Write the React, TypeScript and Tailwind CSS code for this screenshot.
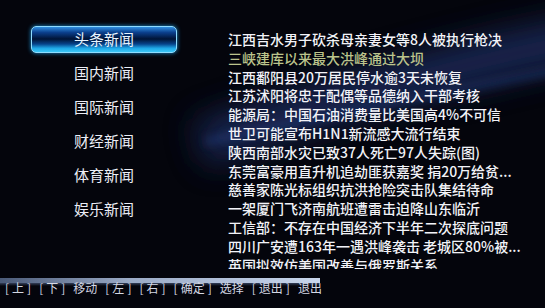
import React from "react";

const news: { t: string; c?: string }[] = [
  { t: "江西吉水男子砍杀母亲妻女等8人被执行枪决" },
  { t: "三峡建库以来最大洪峰通过大坝", c: "text-[#bcc48c]" },
  { t: "江西鄱阳县20万居民停水逾3天未恢复" },
  { t: "江苏沭阳将忠于配偶等品德纳入干部考核" },
  { t: "能源局：中国石油消费量比美国高4%不可信" },
  { t: "世卫可能宣布H1N1新流感大流行结束" },
  { t: "陕西南部水灾已致37人死亡97人失踪(图)" },
  { t: "东莞富豪用直升机追劫匪获嘉奖 捐20万给贫..." },
  { t: "慈善家陈光标组织抗洪抢险突击队集结待命" },
  { t: "一架厦门飞济南航班遭雷击迫降山东临沂" },
  { t: "工信部：不存在中国经济下半年二次探底问题" },
  { t: "四川广安遭163年一遇洪峰袭击 老城区80%被..." },
  { t: "英国拟效仿美国改善与俄罗斯关系" },
];

const menu = ["头条新闻", "国内新闻", "国际新闻", "财经新闻", "体育新闻", "娱乐新闻"];

function Key({ k }: { k: string }) {
  return (
    <span className="flex items-center gap-[3px]">
      <span>[</span>
      <span>{k}</span>
      <span>]</span>
    </span>
  );
}

export default function App() {
  return (
    <div className="relative w-[545px] h-[308px] overflow-hidden bg-[#04050c] font-['Noto_Sans_CJK_SC','Noto_Sans',sans-serif]">
      <svg className="absolute inset-0 pointer-events-none" width="545" height="308">
        <defs>
          <filter id="b1" x="-50%" y="-50%" width="200%" height="200%">
            <feGaussianBlur stdDeviation="16" />
          </filter>
          <filter id="b2" x="-50%" y="-50%" width="200%" height="200%">
            <feGaussianBlur stdDeviation="5" />
          </filter>
        </defs>
        <path d="M580 40 Q 420 70 200 145" stroke="#1a2b5c" strokeWidth="46" fill="none" filter="url(#b1)" opacity="0.85" />
        <path d="M560 70 Q 400 100 205 142" stroke="#2c4c96" strokeWidth="5" fill="none" filter="url(#b2)" opacity="0.55" />
      </svg>

      <div className="relative flex h-full flex-col">
        <div className="flex h-[278px]">
          <div className="flex w-[228px] flex-col pl-[31px] pt-[22px]">
            {menu.map((m, i) => (
              <div key={m} className="flex h-[34px] w-[146px] items-center justify-center">
                {i === 0 ? (
                  <div className="flex h-[27px] w-full items-center justify-center rounded-[5px] border border-[#8fdcff] bg-[linear-gradient(to_bottom,#2f8ee0_0%,#0b3f8c_22%,#001335_48%,#06428a_68%,#1fa8e8_85%,#3cc8f8_100%)] shadow-[0_0_4px_#1a8fd0]">
                    <span className="text-[15px] leading-[18px] text-[#e8f4ff]">{m}</span>
                  </div>
                ) : (
                  <span className="text-[15px] leading-[18px] text-[#eceef6]">{m}</span>
                )}
              </div>
            ))}
          </div>
          <div className="h-[269px] overflow-hidden pt-[30px]">
            {news.map((n) => (
              <div
                key={n.t}
                className={`whitespace-nowrap text-[14px] leading-[18.8px] font-medium ${n.c ?? "text-[#f2f3f8]"}`}
              >
                {n.t}
              </div>
            ))}
          </div>
        </div>

        <div className="relative h-[30px]">
          <div className="absolute left-0 top-0 h-[5px] w-[320px] bg-[linear-gradient(to_right,#4a5a78,#9aaac6_40%,#c8d6ec)]" />
          <div className="absolute left-0 top-[5px] h-[3px] w-[320px] bg-[linear-gradient(to_bottom,#34405a,transparent)]" />
          <div className="relative flex items-center gap-[8px] pl-[5px] pt-[2px] text-[12px] leading-[16px] text-[#d4d8e4]">
            <Key k="上" />
            <Key k="下" />
            <span>移动</span>
            <Key k="左" />
            <Key k="右" />
            <Key k="确定" />
            <span>选择</span>
            <Key k="退出" />
            <span>退出</span>
          </div>
        </div>
      </div>
    </div>
  );
}
